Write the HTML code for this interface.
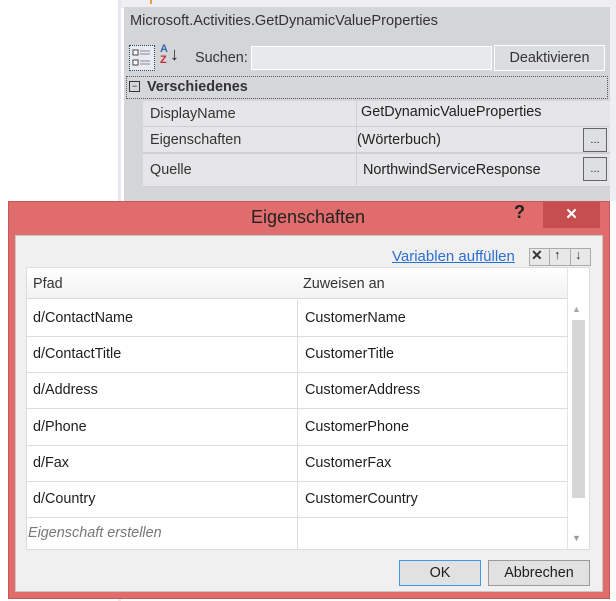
<!DOCTYPE html>
<html><head><meta charset="utf-8"><style>
*{margin:0;padding:0;box-sizing:border-box}
body{width:616px;height:601px;background:#fff;position:relative;overflow:hidden;font-family:"Segoe UI","Liberation Sans",sans-serif;font-size:14.4px;color:#1e1e1e}
.a{position:absolute}
</style></head><body>
<div class="a" style="left:118px;top:0;width:3px;height:601px;background:#e6e6ee"></div>
<div class="a" style="left:121px;top:0;width:495px;height:8px;background:#efeff2"></div>
<div class="a" style="left:150px;top:0;width:2px;height:4px;background:#e8a040"></div>
<div class="a" style="left:124px;top:7px;width:486px;height:194px;background:#d4d5d8"></div>
<div class="a" style="left:610px;top:0;width:6px;height:201px;background:#efeff2"></div>
<div class="a" style="left:130px;top:13px;font-size:14.6px;color:#333">Microsoft.Activities.GetDynamicValueProperties</div>
<div class="a" style="left:129px;top:45px;width:26px;height:26px;border:1px dotted #246;background:#e8eaf0"></div>
<svg class="a" style="left:131px;top:47px" width="22" height="22"><rect x="2" y="3" width="5" height="5" fill="#fff" stroke="#444"/><rect x="2" y="13" width="5" height="5" fill="#fff" stroke="#444"/><path d="M9 4h10M9 7h10M9 14h10M9 17h10" stroke="#889" /></svg>
<div class="a" style="left:160px;top:44px;font-size:11px;font-weight:bold;color:#3a68b0;line-height:11px">A<br><span style="color:#c03030">Z</span></div>
<div class="a" style="left:170px;top:44px;font-size:18px">↓</div>
<div class="a" style="left:195px;top:50px;color:#333">Suchen:</div>
<div class="a" style="left:251px;top:46px;width:241px;height:24px;background:#e8e9ec;border:1px solid #fff"></div>
<div class="a" style="left:494px;top:45px;width:111px;height:26px;background:#dcdde0;border:1px solid #fff;text-align:center;line-height:24px;color:#333">Deaktivieren</div>
<div class="a" style="left:126px;top:76px;width:482px;height:23px;border:1px dotted #555;background:#d6d7da"></div>
<div class="a" style="left:129px;top:81px;width:11px;height:11px;border:1px solid #333;font-size:9px;line-height:8px;text-align:center">−</div>
<div class="a" style="left:147px;top:79px;font-weight:bold;color:#333">Verschiedenes</div>
<div class="a" style="left:143px;top:101px;width:467px;height:86px;background:#e6e6e9"></div>
<div class="a" style="left:143px;top:126px;width:467px;height:1px;background:#d0d0d4"></div>
<div class="a" style="left:143px;top:152px;width:467px;height:2px;background:#d0d0d4"></div>
<div class="a" style="left:143px;top:186px;width:467px;height:1px;background:#d0d0d4"></div>
<div class="a" style="left:356px;top:101px;width:1px;height:86px;background:#d0d0d4"></div>
<div class="a" style="left:150px;top:106px;color:#333">DisplayName</div>
<div class="a" style="left:361px;top:104px;color:#222">GetDynamicValueProperties</div>
<div class="a" style="left:150px;top:132px;color:#333">Eigenschaften</div>
<div class="a" style="left:357px;top:132px;color:#222">(Wörterbuch)</div>
<div class="a" style="left:150px;top:162px;color:#333">Quelle</div>
<div class="a" style="left:363px;top:162px;color:#222">NorthwindServiceResponse</div>
<div class="a" style="left:583px;top:128px;width:24px;height:24px;background:#dedfe2;border:1px solid #666;font-size:11px;text-align:center;line-height:22px">...</div>
<div class="a" style="left:583px;top:157px;width:24px;height:24px;background:#dedfe2;border:1px solid #666;font-size:11px;text-align:center;line-height:22px">...</div>

<div class="a" style="left:8px;top:201px;width:602px;height:398px;background:#e06c6c;border:1px solid #c85858"></div>
<div class="a" style="left:0;top:207px;width:616px;text-align:center;font-size:18px;color:#222">Eigenschaften</div>
<div class="a" style="left:514px;top:202px;font-size:18px;font-weight:bold;color:#222">?</div>
<div class="a" style="left:543px;top:202px;width:57px;height:26px;background:#c74e4e;color:#fff;text-align:center;font-size:15px;line-height:26px;font-weight:bold">✕</div>
<div class="a" style="left:15px;top:235px;width:588px;height:357px;background:#f0f0f0;border:1px solid #c8c8c8"></div>
<div class="a" style="left:392px;top:248px;color:#2a6fd0;text-decoration:underline;text-decoration-color:#2a6fd0;font-size:15px">Variablen auffüllen</div>
<div class="a" style="left:529px;top:248px;width:62px;height:18px;background:#e8e8e8;border:1px solid #aaa"></div>
<div class="a" style="left:549px;top:248px;width:1px;height:18px;background:#aaa"></div>
<div class="a" style="left:570px;top:248px;width:1px;height:18px;background:#aaa"></div>
<div class="a" style="left:531px;top:247px;font-size:14px;font-weight:bold;color:#333">✕</div>
<div class="a" style="left:554px;top:247px;font-size:13px;font-weight:bold;color:#333">↑</div>
<div class="a" style="left:575px;top:247px;font-size:13px;font-weight:bold;color:#333">↓</div>
<div class="a" style="left:26px;top:267px;width:564px;height:283px;background:#fff;border:1px solid #ddd"></div>
<div class="a" style="left:27px;top:268px;width:541px;height:31px;background:linear-gradient(#fff,#f2f2f2);border-bottom:1px solid #d8d8d8"></div>
<div class="a" style="left:33px;top:276px;color:#333">Pfad</div>
<div class="a" style="left:303px;top:276px;color:#333">Zuweisen an</div>
<div class="a" style="left:297px;top:300px;width:1px;height:249px;background:#ddd"></div>
<div class="a" style="left:567px;top:268px;width:1px;height:281px;background:#e4e4e4"></div>
<div class="a" style="left:572px;top:320px;width:13px;height:178px;background:#d6d6d6"></div>
<div class="a" style="left:572px;top:304px;font-size:9px;color:#aaa">▲</div>
<div class="a" style="left:572px;top:533px;font-size:9px;color:#999">▼</div>
<div class="a" style="left:27px;top:336px;width:541px;height:1px;background:#ddd"></div>
<div class="a" style="left:27px;top:372px;width:541px;height:1px;background:#ddd"></div>
<div class="a" style="left:27px;top:408px;width:541px;height:1px;background:#ddd"></div>
<div class="a" style="left:27px;top:445px;width:541px;height:1px;background:#ddd"></div>
<div class="a" style="left:27px;top:481px;width:541px;height:1px;background:#ddd"></div>
<div class="a" style="left:27px;top:517px;width:541px;height:1px;background:#ddd"></div>
<div class="a" style="left:33px;top:310px">d/ContactName</div><div class="a" style="left:305px;top:310px">CustomerName</div>
<div class="a" style="left:33px;top:346px">d/ContactTitle</div><div class="a" style="left:305px;top:346px">CustomerTitle</div>
<div class="a" style="left:33px;top:382px">d/Address</div><div class="a" style="left:305px;top:382px">CustomerAddress</div>
<div class="a" style="left:33px;top:419px">d/Phone</div><div class="a" style="left:305px;top:419px">CustomerPhone</div>
<div class="a" style="left:33px;top:455px">d/Fax</div><div class="a" style="left:305px;top:455px">CustomerFax</div>
<div class="a" style="left:33px;top:491px">d/Country</div><div class="a" style="left:305px;top:491px">CustomerCountry</div>
<div class="a" style="left:28px;top:525px;font-style:italic;color:#777">Eigenschaft erstellen</div>
<div class="a" style="left:399px;top:560px;width:82px;height:26px;background:#e1e1e1;border:1px solid #3c9ae8;text-align:center;line-height:24px">OK</div>
<div class="a" style="left:488px;top:560px;width:102px;height:26px;background:#e1e1e1;border:1px solid #999;text-align:center;line-height:24px">Abbrechen</div>
</body></html>
